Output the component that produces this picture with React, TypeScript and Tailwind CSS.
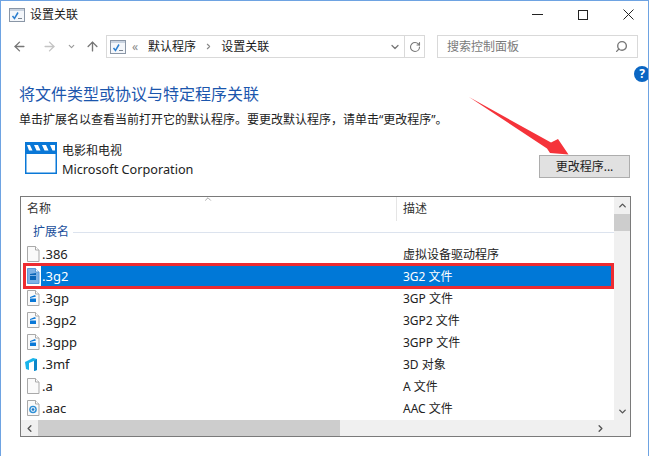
import { ChevronDown, ChevronLeft, ChevronRight, ChevronUp, ArrowLeft, ArrowRight, ArrowUp, RotateCw, Search } from 'lucide-react'

const FONT = 'font-["Noto_Sans","Noto_Sans_CJK_SC",sans-serif]'

type Kind = 'blank' | 'video' | 'video2' | 'mf' | 'audio'

interface Row {
  ext: string
  desc: string
  icon: Kind
  selected?: boolean
}

const rows: Row[] = [
  { ext: '.386', desc: '虚拟设备驱动程序', icon: 'blank' },
  { ext: '.3g2', desc: '3G2 文件', icon: 'video', selected: true },
  { ext: '.3gp', desc: '3GP 文件', icon: 'video2' },
  { ext: '.3gp2', desc: '3GP2 文件', icon: 'video2' },
  { ext: '.3gpp', desc: '3GPP 文件', icon: 'video2' },
  { ext: '.3mf', desc: '3D 对象', icon: 'mf' },
  { ext: '.a', desc: 'A 文件', icon: 'blank' },
  { ext: '.aac', desc: 'AAC 文件', icon: 'audio' },
]

function CheckWindowIcon({ className }: { className?: string }) {
  return (
    <svg viewBox="0 0 16 14" className={className}>
      <rect x="0.5" y="0.5" width="15" height="13" fill="#f4f7fb" stroke="#8a96a6" />
      <rect x="1" y="1" width="14" height="2" fill="#c9d3e0" />
      <path d="M3.500 8l2 2.500L9 4.500" fill="none" stroke="#2b7fd0" strokeWidth="1.500" />
      <path d="M9 10.500h4" stroke="#7a8490" />
    </svg>
  )
}

function FileIcon({ kind, selected }: { kind: Kind; selected?: boolean }) {
  if (kind === 'mf') {
    return (
      <svg viewBox="0 0 16 16" className="w-4 h-4">
        <path d="M1 6l8-4 4 1v11l-3 1V5L5 7v7l-3-1z" fill="#19b4ea" />
        <path d="M10 5l3-2v11l-3 1z" fill="#0d86c8" />
      </svg>
    )
  }
  return (
    <svg viewBox="0 0 14 16" className="w-[14px] h-4">
      <path d="M1.500 .5h8l3.500 3.500v11.500h-11.500z" fill={selected ? '#7fb2e5' : '#fafafa'} stroke={selected ? '#5d9bd8' : '#a9a9a9'} />
      <path d="M9.500 .5v3.500h3.500" fill="#fff" stroke={selected ? '#5d9bd8' : '#a9a9a9'} />
      {kind === 'video' && <path d="M4 6l6-1v2H4zM4 8h6v4H4z" fill="#0b66b8" />}
      {kind === 'video2' && <path d="M4 7l5-2 1 1.500-6 1.500zM4 8.500h6V12H4z" fill="#0a78d7" />}
      {kind === 'audio' && (
        <>
          <circle cx="7" cy="9.500" r="3.800" fill="#2d8fd6" />
          <circle cx="7" cy="9.500" r="2.400" fill="#dcecf9" />
          <circle cx="7" cy="9.500" r="1.300" fill="#1f78c4" />
        </>
      )}
    </svg>
  )
}

export default function App() {
  return (
    <div className={`relative w-[649px] h-[456px] overflow-hidden bg-white border-x border-t border-[#6ea3e2] text-[#1a1a1a] ${FONT}`}>
      {/* 标题栏 */}
      <div className="flex items-center h-[27px] pl-[8px] pr-[14px]">
        <CheckWindowIcon className="w-4 h-[14px]" />
        <span className="ml-[5px] text-xs">设置关联</span>
        <div className="ml-auto flex items-center gap-[35px] text-[#222]">
          <div className="w-[11px] h-px bg-[#222]" />
          <div className="w-[10px] h-[10px] border border-[#222]" />
          <svg viewBox="0 0 11 11" className="w-[11px] h-[11px]">
            <path d="M.5 .5l10 10M10.500 .5l-10 10" stroke="#222" fill="none" />
          </svg>
        </div>
      </div>

      {/* 地址栏 */}
      <div className="flex items-center h-[23px] mt-[7px] pl-[11px] pr-[9px]">
        <ArrowLeft className="w-[15px] h-[15px] text-[#777]" strokeWidth={2.200} />
        <ArrowRight className="w-[15px] h-[15px] ml-[15px] text-[#c4c4c4]" strokeWidth={2.200} />
        <ChevronDown className="w-[9px] h-[9px] ml-[10px] text-[#999]" strokeWidth={3} />
        <ArrowUp className="w-[15px] h-[15px] ml-[9px] text-[#777]" strokeWidth={2.200} />
        <div className="flex items-center w-[319px] h-[23px] ml-[6px] border border-[#d9d9d9]">
          <CheckWindowIcon className="ml-[3px] w-4 h-[14px]" />
          <span className="ml-[6px] text-xs text-[#888] tracking-[-1px]">«</span>
          <span className="ml-[11px] text-xs">默认程序</span>
          <ChevronRight className="ml-[8px] w-[9px] h-[9px] text-[#888]" strokeWidth={3} />
          <span className="ml-[8px] text-xs">设置关联</span>
          <ChevronDown className="ml-auto mr-[3px] w-3 h-3 text-[#777]" strokeWidth={2.500} />
          <div className="flex items-center justify-center w-[20px] h-full border-l border-[#d9d9d9]">
            <RotateCw className="w-3 h-3 text-[#777]" strokeWidth={2.200} />
          </div>
        </div>
        <div className="flex items-center w-[201px] h-[23px] ml-[12px] px-[9px] border border-[#d9d9d9]">
          <span className="text-xs text-[#7a7a7a]">搜索控制面板</span>
          <Search className="ml-auto -scale-x-100 w-[13px] h-[13px] text-[#777]" strokeWidth={2.500} />
        </div>
      </div>

      {/* 说明 */}
      <div className="pl-[19px] pr-[16px]">
        <h1 className="mt-[25px] -ml-px text-[16px] leading-[22px] font-normal text-[#1b56ad]">将文件类型或协议与特定程序关联</h1>
        <p className="mt-[5px] -ml-px text-xs leading-[20px] text-[#222]">单击扩展名以查看当前打开它的默认程序。要更改默认程序，请单击“更改程序”。</p>

        <div className="flex items-center mt-[11px] h-[37px]">
          <svg viewBox="0 0 32 32" className="ml-[5px] -mt-[3px] w-[32px] h-[32px]">
            <rect x="0" y="0" width="32" height="32" fill="#0a78d7" />
            <rect x="1.500" y="12" width="29" height="18.500" fill="#fff" />
            <path d="M2 3h3l2.500 5.500H4zM9 3h4l2.500 5.500h-4zM17 3h4l2.500 5.500h-4zM25 3h5v5.500h-2.500z" fill="#fff" />
          </svg>
          <div className="ml-[5px] text-[12px] leading-[18px] text-[#222]">
            <div>电影和电视</div>
            <div className="text-[12.700px]">Microsoft Corporation</div>
          </div>
          <button className="ml-auto mr-[2px] self-end w-[91px] h-[23px] bg-[#e1e1e1] border border-[#adadad] text-xs text-[#222]">更改程序...</button>
        </div>

        {/* 列表 */}
        <div className="relative mt-[18px] w-[611px] h-[241px] border border-[#7a7a7a] flex flex-col">
          <div className="flex flex-1 min-h-0">
            <div className="flex-1 min-w-0 flex flex-col">
              <div className="relative flex h-[24px] items-center text-xs text-[#333]">
                <div className="w-[375px] pl-[6px]">名称</div>
                <div className="h-full border-l border-[#e5e5e5] pl-[6px] leading-[24px]">描述</div>
                <ChevronUp className="absolute left-[181px] -top-[3px] w-[12px] h-[10px] text-[#777]" strokeWidth={1.500} />
              </div>
              <div className="flex items-center h-[22px] pl-[12px] text-xs text-[#1b4f9c]">
                <span>扩展名</span>
                <div className="flex-1 h-px ml-[4px] bg-[#dce3ee]" />
              </div>
              {rows.map((r) => (
                <div
                  key={r.ext}
                  className={`flex items-center h-[22px] text-xs ${r.selected ? 'bg-[#0078d7] text-white' : 'text-[#222]'}`}
                >
                  <div className="flex items-center w-[375px]">
                    <div className={`flex items-center justify-end w-[20px] h-[22px] pr-px ${r.selected ? 'bg-white' : ''}`}>
                      <FileIcon kind={r.icon} selected={r.selected} />
                    </div>
                    <span className="ml-px mt-[2px] text-[13px]">{r.ext}</span>
                  </div>
                  <span className="pl-[7px] mt-[2px]">{r.desc}</span>
                </div>
              ))}
            </div>
            <div className="flex flex-col items-center w-[16px] bg-[#f0f0f0]">
              <ChevronUp className="w-[11px] h-[17px] text-[#555]" strokeWidth={3} />
              <div className="w-full h-[17px] bg-[#cdcdcd]" />
              <ChevronDown className="mt-auto w-[11px] h-[17px] text-[#555]" strokeWidth={3} />
            </div>
          </div>
          <div className="flex items-center h-[16px] bg-[#f0f0f0]">
            <ChevronLeft className="w-[17px] h-[11px] text-[#555]" strokeWidth={3} />
            <div className="w-[302px] h-full bg-[#cdcdcd]" />
            <ChevronRight className="ml-auto mr-[24px] w-[11px] h-[11px] text-[#555]" strokeWidth={3} />
          </div>
        </div>
      </div>

      {/* 标注 */}
      <div className="absolute left-[22px] top-[262px] w-[591px] h-[26px] border-[3px] border-[#ee2b30]" />
      <svg viewBox="0 0 649 456" className="absolute -left-px -top-px w-[649px] h-[456px] pointer-events-none">
        <path d="M469 97L551 142.500L558 139L568.500 154.500L550 153L547 148.500z" fill="#f5333a" />
      </svg>
      <div className="absolute left-[633px] top-[65px] w-[16px] h-[16px] rounded-full bg-[#0b66c3] text-white text-[12px] leading-[16px] font-bold text-center">?</div>
    </div>
  )
}
